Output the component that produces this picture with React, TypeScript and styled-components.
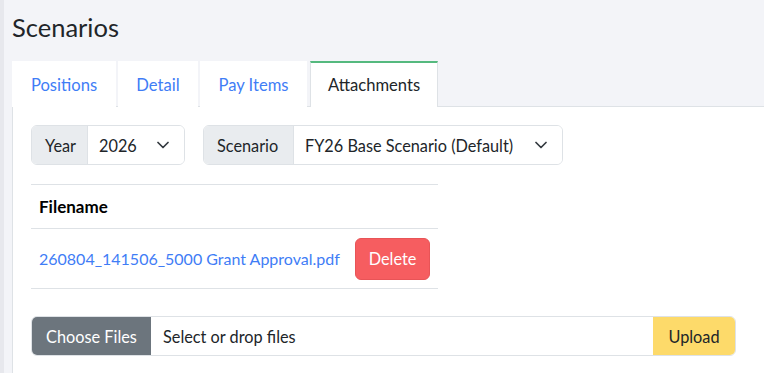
import React from "react";
import styled, { createGlobalStyle } from "styled-components";

const Global = createGlobalStyle`
  html, body { margin: 0; padding: 0; }
  body {
    background: #f3f4f8;
    font-family: Lato, "Noto Sans", sans-serif;
    color: #212529;
    overflow: hidden;
  }
`;

const Page = styled.div`
  display: flex;
  min-height: 373px;
`;

const SideStrip = styled.div`
  width: 4px;
  flex: none;
  background: #e7e8ed;
`;

const Main = styled.div`
  flex: 1;
  padding-left: 8px;
  display: flex;
  flex-direction: column;
`;

const Title = styled.h1`
  margin: 0;
  height: 61px;
  box-sizing: border-box;
  padding-top: 12px;
  font-size: 25.5px;
  font-weight: 400;
  line-height: 30px;
  color: #212529;
`;

const TabBar = styled.div`
  display: flex;
  gap: 2px;
  border-bottom: 1px solid #dee2e6;
  height: 45px;
`;

const Tab = styled.div<{ $active?: boolean; $w: number }>`
  width: ${(p) => p.$w}px;
  height: 46px;
  box-sizing: border-box;
  margin-bottom: -1px;
  background: #fff;
  display: flex;
  align-items: center;
  justify-content: center;
  padding-bottom: 1px;
  font-size: 16.6px;
  color: ${(p) => (p.$active ? "#212529" : "#3f7df6")};
  border-top: 2px solid ${(p) => (p.$active ? "#55b97e" : "#fff")};
  border-left: 1px solid ${(p) => (p.$active ? "#dee2e6" : "#fff")};
  border-right: 1px solid ${(p) => (p.$active ? "#dee2e6" : "#fff")};
  margin-left: ${(p) => (p.$active ? "1px" : "0")};
`;

const Panel = styled.div`
  flex: 1;
  background: #fff;
  border-left: 1px solid #dee2e6;
  padding: 18px 28px 0 18px;
`;

const FilterRow = styled.div`
  display: flex;
  gap: 18px;
`;

const InputGroup = styled.div`
  display: flex;
  height: 40px;
  box-sizing: border-box;
  border: 1px solid #dee2e6;
  border-radius: 6px;
  overflow: hidden;
  font-size: 16.3px;
`;

const Addon = styled.div<{ $w: number }>`
  width: ${(p) => p.$w}px;
  box-sizing: border-box;
  background: #e9ecef;
  border-right: 1px solid #dee2e6;
  display: flex;
  align-items: center;
  padding-left: 13px;
  color: #212529;
`;

const SelectBox = styled.div<{ $w: number }>`
  width: ${(p) => p.$w}px;
  box-sizing: border-box;
  display: flex;
  align-items: center;
  justify-content: space-between;
  padding: 0 15px 0 11px;
  background: #fff;
  color: #212529;
`;

const Table = styled.div`
  width: 407px;
  margin-top: 19px;
  border-top: 1px solid #dee2e6;
`;

const HeadRow = styled.div`
  height: 44px;
  box-sizing: border-box;
  border-bottom: 1px solid #dee2e6;
  display: flex;
  align-items: center;
  padding: 0 8px;
  font-weight: 700;
  font-size: 17px;
  color: #000;
`;

const BodyRow = styled.div`
  height: 60px;
  box-sizing: border-box;
  border-bottom: 1px solid #dee2e6;
  display: flex;
  align-items: center;
  justify-content: space-between;
  padding: 0 8px;
  font-size: 16px;
`;

const FileLink = styled.a`
  color: #3f7df6;
  text-decoration: none;
`;

const DangerButton = styled.button`
  width: 75px;
  height: 42px;
  border: 1px solid #e85457;
  border-radius: 6px;
  background: #f65d60;
  color: #fff;
  font-family: inherit;
  font-size: 16.3px;
`;

const FileGroup = styled.div`
  margin-top: 27px;
  display: flex;
  height: 40px;
  box-sizing: border-box;
  border: 1px solid #dee2e6;
  border-radius: 6px;
  overflow: hidden;
  font-size: 16.3px;
`;

const ChooseBtn = styled.div`
  width: 119px;
  background: #6c757d;
  color: #fff;
  display: flex;
  align-items: center;
  justify-content: center;
`;

const FileText = styled.div`
  flex: 1;
  display: flex;
  align-items: center;
  padding-left: 12px;
  color: #212529;
`;

const UploadBtn = styled.div`
  width: 82px;
  background: #fdda6a;
  color: #212529;
  display: flex;
  align-items: center;
  justify-content: center;
`;

const Chevron = () => (
  <svg width="12" height="8" viewBox="0 0 12 8" fill="none">
    <path d="M1 1.5l5 5 5-5" stroke="#343a40" strokeWidth="1.7" strokeLinecap="round" strokeLinejoin="round" />
  </svg>
);

export default function App() {
  return (
    <>
      <Global />
      <Page>
        <SideStrip />
        <Main>
          <Title>Scenarios</Title>
          <TabBar>
            <Tab $w={104}>Positions</Tab>
            <Tab $w={80}>Detail</Tab>
            <Tab $w={107}>Pay Items</Tab>
            <Tab $w={128} $active>Attachments</Tab>
          </TabBar>
          <Panel>
            <FilterRow>
              <InputGroup>
                <Addon $w={56}>Year</Addon>
                <SelectBox $w={96}>
                  2026 <Chevron />
                </SelectBox>
              </InputGroup>
              <InputGroup>
                <Addon $w={90}>Scenario</Addon>
                <SelectBox $w={268}>
                  FY26 Base Scenario (Default) <Chevron />
                </SelectBox>
              </InputGroup>
            </FilterRow>
            <Table>
              <HeadRow>Filename</HeadRow>
              <BodyRow>
                <FileLink href="#">260804_141506_5000 Grant Approval.pdf</FileLink>
                <DangerButton>Delete</DangerButton>
              </BodyRow>
            </Table>
            <FileGroup>
              <ChooseBtn>Choose Files</ChooseBtn>
              <FileText>Select or drop files</FileText>
              <UploadBtn>Upload</UploadBtn>
            </FileGroup>
          </Panel>
        </Main>
      </Page>
    </>
  );
}
